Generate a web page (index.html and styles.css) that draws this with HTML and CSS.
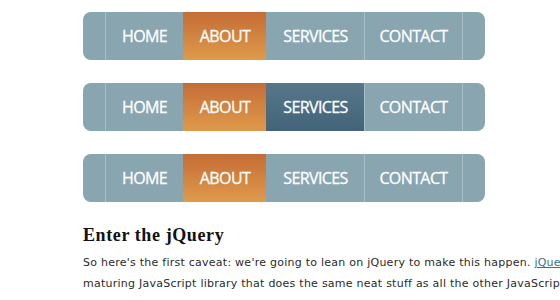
FILE: index.html
```html
<!DOCTYPE html>
<html lang="en">
<head>
    <meta charset="UTF-8">
    <title>CSS Sprites2 - Enter the jQuery</title>
    <link rel="stylesheet" href="styles.css">
</head>
<body>
<div class="page">
    <ul class="nav">
        <li class="cap"></li>
        <li><a href="#">HOME</a></li>
        <li class="active"><a href="#">ABOUT</a></li>
        <li><a href="#">SERVICES</a></li>
        <li><a href="#">CONTACT</a></li>
        <li class="cap end"></li>
    </ul>

    <ul class="nav">
        <li class="cap"></li>
        <li><a href="#">HOME</a></li>
        <li class="active"><a href="#">ABOUT</a></li>
        <li class="hover"><a href="#">SERVICES</a></li>
        <li><a href="#">CONTACT</a></li>
        <li class="cap end"></li>
    </ul>

    <ul class="nav">
        <li class="cap"></li>
        <li><a href="#">HOME</a></li>
        <li class="active"><a href="#">ABOUT</a></li>
        <li><a href="#">SERVICES</a></li>
        <li><a href="#">CONTACT</a></li>
        <li class="cap end"></li>
    </ul>

    <h3>Enter the jQuery</h3>
    <p>So here's the first caveat: we're going to lean on jQuery to make this happen. <a href="#">jQuery</a> is a
        maturing JavaScript library that does the same neat stuff as all the other JavaScript libraries,
        and it has an additional advantage that lends itself particularly well to extending CSS: it allows you
        to select elements on a page using CSS-like syntax.</p>
</div>
</body>
</html>
```

FILE: styles.css
```css
* { box-sizing: border-box; }
html, body { overflow: hidden; }
body {
    margin: 0;
    background: #fff;
    font-family: "DejaVu Sans", Verdana, sans-serif;
    color: #333;
}

.page {
    width: 700px;
    padding: 12px 0 0 83px;
}

.nav {
    display: flex;
    width: 402px;
    height: 48px;
    margin: 0 0 23px;
    padding: 0;
    list-style: none;
    background: #88a5b0;
    border-radius: 8px;
    overflow: hidden;
}

.nav li {
    border-left: 1px solid #a8bec6;
}
.nav li:nth-child(2) { width: 78px; }
.nav li:nth-child(3) { width: 83px; }
.nav li:nth-child(4) { width: 98px; }
.nav li:nth-child(5) { width: 98px; }

.nav li.cap { width: 22px; border-left: none; }
.nav li.cap.end { width: 23px; border-left: 1px solid #a8bec6; }

.nav li:nth-child(3),
.nav li:nth-child(4) { border-left-color: transparent; }

.nav a {
    display: flex;
    align-items: center;
    justify-content: center;
    height: 100%;
    color: #fff;
    text-decoration: none;
    font-family: "Open Sans", sans-serif;
    font-size: 16px;
    letter-spacing: -0.6px;
    -webkit-text-stroke: 0.3px #fff;
}

.nav li.active { background: linear-gradient(#c56c36, #de9b4b); }
.nav li.hover { background: linear-gradient(#577788, #43637a); }

h3 {
    margin: 15px 0 0;
    font-family: "Liberation Serif", serif;
    font-size: 18px;
    font-weight: bold;
    letter-spacing: 0.6px;
    color: #111;
}

p {
    width: 540px;
    margin: 6px 0 0;
    font-size: 11px;
    line-height: 21px;
    letter-spacing: 0.25px;
    color: #2b2b2b;
}

p a { color: #3b6f80; }
```
